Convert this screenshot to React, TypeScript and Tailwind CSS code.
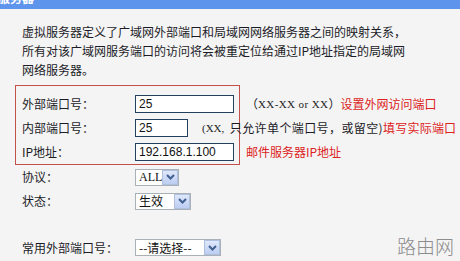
import React from "react";

const cjk = "font-['Noto_Sans_CJK_SC','Noto_Sans_CJK_SC',sans-serif]";

function Chevron() {
  return (
    <svg width="9" height="6" viewBox="0 0 9 6">
      <path d="M1 1 L4.5 4.5 L8 1" fill="none" stroke="#3f5f8f" strokeWidth="2" />
    </svg>
  );
}

function Select({ text, width, serif }: { text: string; width: string; serif?: boolean }) {
  return (
    <div className={`flex h-[17px] shrink-0 items-stretch border border-[#a9b0b8] bg-white ${width}`}>
      <div
        className={`flex flex-1 items-center pl-[3px] leading-[12px] text-[#111] ${
          serif ? "font-['Liberation_Serif',serif] text-[12px]" : `${cjk} text-[12px]`
        }`}
      >
        {text}
      </div>
      <div className="flex w-[16px] shrink-0 items-center justify-center border border-[#aebfe0] bg-gradient-to-b from-[#dfe8fb] to-[#bccdf2]">
        <Chevron />
      </div>
    </div>
  );
}

function Input({ value, width }: { value: string; width: string }) {
  return (
    <div
      className={`flex h-[18px] shrink-0 items-center border border-[#24405f] bg-white pl-[3px] font-['Liberation_Sans',sans-serif] text-[12px] leading-[12px] text-[#111] ${width}`}
    >
      {value}
    </div>
  );
}

export default function App() {
  return (
    <div className={`relative h-[261px] w-[460px] overflow-hidden bg-[#f4f4f4] ${cjk} text-[#1c1c28]`}>
      <div className="h-[9px] overflow-hidden bg-[#5f94ec]">
        <div className="-ml-[2px] -mt-[8px] text-[12px] font-bold leading-[12px] text-white">服务器</div>
      </div>

      <div className="mt-[13px] pl-[22px] text-[12px] leading-[19px] whitespace-nowrap">
        <div>虚拟服务器定义了广域网外部端口和局域网网络服务器之间的映射关系，</div>
        <div>所有对该广域网服务端口的访问将会被重定位给通过IP地址指定的局域网</div>
        <div>网络服务器。</div>
      </div>

      <div className="ml-[15px] mt-[6px] h-[80px] w-[225px] border border-[#c4504c] pl-[6px] pt-[6px] text-[12px] whitespace-nowrap">
        <div className="flex h-[24px] items-center">
          <div className="w-[113px] shrink-0">外部端口号：</div>
          <Input value="25" width="w-[99px]" />
          <div className="ml-[12px] flex shrink-0 items-center">
            <span>（</span>
            <span className="font-['Liberation_Serif',serif] text-[11px] tracking-[0.4px] text-[#222]">XX-XX or XX</span>
            <span>）</span>
            <span className="text-[#dc2222]">设置外网访问端口</span>
          </div>
        </div>
        <div className="flex h-[24px] items-center">
          <div className="w-[113px] shrink-0">内部端口号：</div>
          <Input value="25" width="w-[53px]" />
          <div className="ml-[14px] flex shrink-0 items-center">
            <span className="font-['Liberation_Serif',serif] text-[11px] text-[#222]">(XX,&nbsp;&nbsp;</span>
            <span className="tracking-[0.4px]">只允许单个端口号，或留空)</span>
            <span className="tracking-[0.2px] text-[#dc2222]">填写实际端口</span>
          </div>
        </div>
        <div className="flex h-[24px] items-center">
          <div className="w-[113px] shrink-0">IP地址：</div>
          <Input value="192.168.1.100" width="w-[99px]" />
          <div className="ml-[12px] shrink-0 text-[#dc2222]">邮件服务器IP地址</div>
        </div>
      </div>

      <div className="pl-[22px] text-[12px] whitespace-nowrap">
        <div className="mt-[3px] flex h-[18px] items-center">
          <div className="w-[113px] shrink-0">协议：</div>
          <Select text="ALL" width="w-[44px]" serif />
        </div>
        <div className="mt-[6px] flex h-[18px] items-center">
          <div className="w-[113px] shrink-0">状态：</div>
          <Select text="生效" width="w-[56px]" />
        </div>
        <div className="mt-[28px] flex h-[19px] items-center">
          <div className="w-[113px] shrink-0">常用外部端口号：</div>
          <Select text="--请选择--" width="w-[86px]" />
        </div>
      </div>

      <div className="absolute left-[397px] top-[234px] text-[19px] font-light leading-[24px] text-[#8c8c8c]">路由网</div>
    </div>
  );
}
